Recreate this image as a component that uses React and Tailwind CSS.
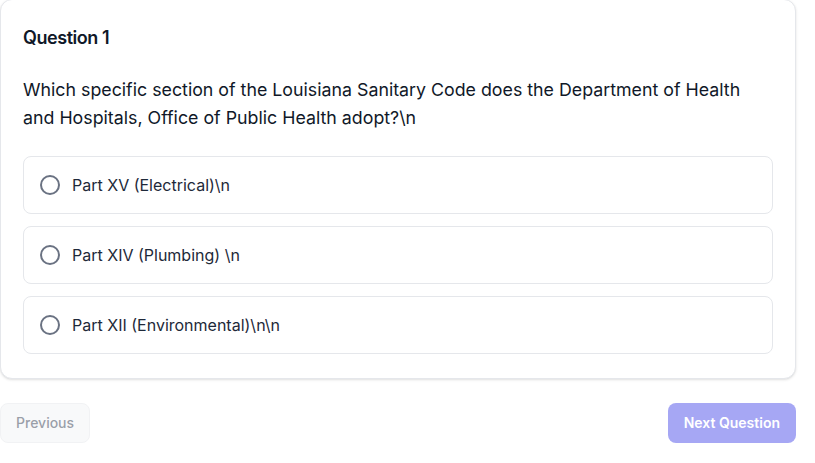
import React, { useState } from 'react';

const options = [
    'Part XV (Electrical)\\n',
    'Part XIV (Plumbing) \\n',
    'Part XII (Environmental)\\n\\n',
];

const App = () => {
    const [selected, setSelected] = useState(null);

    return (
        <div className="min-h-screen bg-white font-['Inter',sans-serif] text-gray-900">
            <div className="w-[796px] -mt-px">
                {/* Question Card */}
                <div className="bg-white border border-gray-200 rounded-xl shadow-sm px-[22px] py-6">
                    <h2 className="text-lg font-semibold tracking-tight leading-7 mb-6">Question 1</h2>
                    <p className="text-[17.8px] leading-7 text-gray-900 mb-6 pr-px">
                        Which specific section of the Louisiana Sanitary Code does the Department of Health and Hospitals, Office of Public Health adopt?\n
                    </p>

                    <div className="flex flex-col gap-3">
                        {options.map((opt, i) => (
                            <button
                                key={i}
                                onClick={() => setSelected(i)}
                                className="flex items-center gap-3 w-full text-left px-4 py-4 border border-gray-200 rounded-lg bg-white"
                            >
                                <span className="w-5 h-5 rounded-full border-2 border-gray-500 shrink-0 flex items-center justify-center">
                                    {selected === i && <span className="w-2.5 h-2.5 rounded-full bg-indigo-600" />}
                                </span>
                                <span className="text-base leading-6 text-gray-800">{opt}</span>
                            </button>
                        ))}
                    </div>
                </div>

                {/* Navigation */}
                <div className="flex items-center justify-between mt-6">
                    <button
                        disabled
                        className="px-[15px] py-[9px] text-sm font-medium text-gray-700 bg-gray-100 border border-gray-200 rounded-lg opacity-50"
                    >
                        Previous
                    </button>
                    <button
                        disabled={selected === null}
                        className="px-4 py-2.5 text-sm font-semibold text-white bg-[#a6a7f4] rounded-lg"
                    >
                        Next Question
                    </button>
                </div>
            </div>
        </div>
    );
};

export default App;
